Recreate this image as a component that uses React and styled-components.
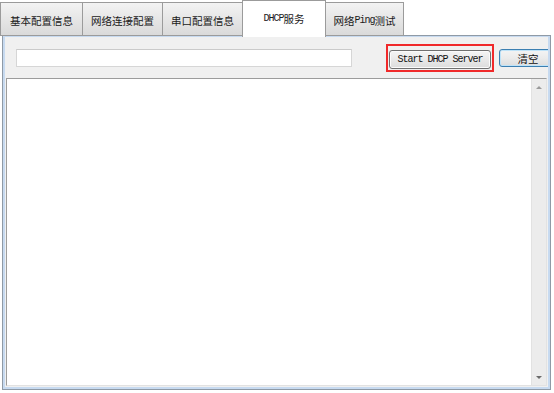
import React from 'react';
import styled, { createGlobalStyle } from 'styled-components';

const GlobalStyle = createGlobalStyle`
  html, body {
    margin: 0;
    padding: 0;
    background: #fff;
  }
  body {
    font-family: "Noto Sans CJK SC", "Liberation Sans", sans-serif;
  }
`;

const tabs = [
  { label: '基本配置信息', width: 83 },
  { label: '网络连接配置', width: 81 },
  { label: '串口配置信息', width: 81 },
  { label: ['DHCP', '服务'], width: 84, active: true },
  { label: ['网络', 'Ping', '测试'], width: 79 },
];

function renderLabel(label) {
  if (typeof label === 'string') return label;
  return label.map((part, i) =>
    /^[A-Za-z ]+$/.test(part) ? <Latin key={i}>{part}</Latin> : <span key={i}>{part}</span>
  );
}

export default function App() {
  return (
    <>
      <GlobalStyle />
      <Page>
        <TabRow>
          {tabs.map((t, i) => (
            <Tab key={i} $active={t.active} $width={t.width}>
              {renderLabel(t.label)}
            </Tab>
          ))}
        </TabRow>
        <Panel>
          <Inner>
            <Toolbar>
              <Input />
              <Highlight>
                <Button>
                  <Latin>Start DHCP Server</Latin>
                </Button>
              </Highlight>
              <DefaultButton>清空</DefaultButton>
            </Toolbar>
            <LogArea>
              <LogBody />
              <ScrollTrack>
                <Arrow $dir='up' />
                <Arrow $dir='down' />
              </ScrollTrack>
            </LogArea>
          </Inner>
        </Panel>
      </Page>
    </>
  );
}

const Page = styled.div`
  width: 554px;
  height: 393px;
  overflow: hidden;
  background: #fff;
`;
const TabRow = styled.div`
  display: flex;
  align-items: flex-end;
  height: 36px;
  position: relative;
  z-index: 1;
`;
const Tab = styled.div`
  box-sizing: border-box;
  display: flex;
  align-items: center;
  justify-content: center;
  flex-shrink: 0;
  width: ${p => p.$width}px;
  height: ${p => (p.$active ? '37px' : '34px')};
  margin-left: -1px;
  margin-bottom: ${p => (p.$active ? '-1px' : '0')};
  padding-top: ${p => (p.$active ? '0' : '2px')};
  padding-bottom: ${p => (p.$active ? '2px' : '0')};
  border: 1px solid #9b9b9b;
  border-bottom: ${p => (p.$active ? 'none' : '1px solid #9b9b9b')};
  background: ${p =>
    p.$active ? '#fff' : 'linear-gradient(#f3f3f3, #e6e6e6 50%, #dadada)'};
  font-size: 10.5px;
  color: #1a1a1a;
  white-space: nowrap;
  &:first-child {
    margin-left: 0;
  }
`;
const Latin = styled.span`
  font-family: "Liberation Mono", monospace;
  font-size: 10px;
  letter-spacing: -1px;
`;
const Panel = styled.div`
  box-sizing: border-box;
  margin-left: 2px;
  margin-top: -1px;
  width: 549px;
  height: 355px;
  border: 1px solid #8f9aa6;
  display: flex;
`;
const Inner = styled.div`
  flex: 1;
  display: flex;
  flex-direction: column;
  border: 2px solid #c7daf0;
  border-top-width: 1px;
  background: #f0f0f0;
  overflow: hidden;
`;
const Toolbar = styled.div`
  display: flex;
  align-items: center;
  height: 41px;
  padding-left: 11px;
  flex-shrink: 0;
`;
const Input = styled.div`
  box-sizing: border-box;
  flex-shrink: 0;
  width: 336px;
  height: 18px;
  margin-top: 1px;
  background: #fff;
  border: 1px solid #d6d6d6;
  border-top-color: #cacaca;
`;
const Highlight = styled.div`
  flex-shrink: 0;
  margin-left: 34px;
  padding: 4px 1px 1px;
  border: 2px solid #f0292a;
  display: flex;
`;
const Button = styled.div`
  box-sizing: border-box;
  width: 102px;
  height: 19px;
  display: flex;
  align-items: center;
  justify-content: center;
  border: 1px solid #707070;
  border-radius: 3px;
  background: linear-gradient(#f5f5f5, #e9e9e9 50%, #dcdcdc);
  box-shadow: inset 0 0 0 1px #fbfbfb;
  color: #111;
`;
const DefaultButton = styled.div`
  box-sizing: border-box;
  flex-shrink: 0;
  width: 58px;
  height: 18px;
  margin-left: 5px;
  margin-top: 1px;
  display: flex;
  align-items: center;
  justify-content: center;
  border: 1px solid #3c7fb1;
  border-radius: 3px;
  background: linear-gradient(#f4f4f4, #ebebeb 50%, #dddddd);
  box-shadow: inset 0 0 0 1px #bfe3f8;
  font-size: 10.5px;
  color: #111;
`;
const LogArea = styled.div`
  flex: 1;
  display: flex;
  margin: 0 1px 1px;
  border: 1px solid;
  border-color: #9c9c9c #e2e2e2 #e2e2e2 #9c9c9c;
  background: #fff;
`;
const LogBody = styled.div`
  flex: 1;
`;
const ScrollTrack = styled.div`
  width: 14px;
  background: #ececec;
  border-left: 1px solid #e2e2e2;
  display: flex;
  flex-direction: column;
  justify-content: space-between;
  align-items: center;
  padding: 7px 0 6px;
`;
const Arrow = styled.div`
  width: 0;
  height: 0;
  border-left: 3px solid transparent;
  border-right: 3px solid transparent;
  ${p =>
    p.$dir === 'up'
      ? 'border-bottom: 3px solid #9a9a9a;'
      : 'border-top: 3px solid #6a6a6a;'}
`;
